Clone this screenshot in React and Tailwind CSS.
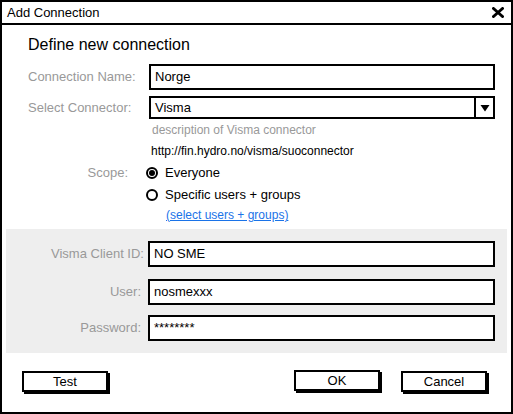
import React from 'react';

const font = { fontFamily: '"Liberation Sans", Arial, sans-serif' };

const Field = ({ value, className = '' }) => (
  <div className={`flex-1 h-[26px] border-2 border-black bg-white flex items-center px-[4px] text-[13px] text-black ${className}`}>
    {value}
  </div>
);

const Radio = ({ checked, label }) => (
  <div className="flex items-center gap-[7px] h-[14px]">
    <span className="w-[12px] h-[12px] rounded-full border-2 border-black flex items-center justify-center bg-white">
      {checked && <span className="w-[6px] h-[6px] rounded-full bg-black" />}
    </span>
    <span className="text-[13px] text-black">{label}</span>
  </div>
);

const Button = ({ children, className = '' }) => (
  <button className={`w-[86px] h-[21px] border-2 border-black bg-white shadow-[2px_2px_0_#000] text-[13px] text-black leading-none ${className}`}>
    {children}
  </button>
);

const App = () => {
  return (
    <div style={font} className="w-[513px] h-[414px] border-2 border-black bg-white flex flex-col overflow-hidden">
      {/* title bar */}
      <div className="h-[23px] border-b-2 border-black flex items-center justify-between pl-[5px] pr-[6px] shrink-0">
        <span className="text-[13px] text-black">Add Connection</span>
        <svg width="12" height="11" viewBox="0 0 12 11" className="mr-[1px]">
          <path d="M1.5 1.5 L10.5 9.5 M10.5 1.5 L1.5 9.5" stroke="#000" strokeWidth="3" strokeLinecap="round" />
        </svg>
      </div>

      <div className="pl-[26px] pr-[16px]">
        <h2 className="mt-[10px] text-[16px] leading-[20px] text-black">Define new connection</h2>

        <div className="mt-[9px] flex items-center">
          <label className="w-[121px] text-[13px] text-[#999]">Connection Name:</label>
          <Field value="Norge" />
        </div>

        <div className="mt-[6px] flex items-center">
          <label className="w-[121px] text-[13px] text-[#999]">Select Connector:</label>
          <div className="flex-1 h-[23px] border-2 border-black bg-white flex items-center text-[13px] text-black">
            <span className="flex-1 pl-[4px]">Visma</span>
            <span className="w-[19px] h-full border-l-2 border-black flex items-center justify-center">
              <svg width="10" height="8" viewBox="0 0 10 8">
                <path d="M0.5 1 L9.5 1 L5 7.5 Z" fill="#000" />
              </svg>
            </span>
          </div>
        </div>

        <div className="ml-[124px] mt-[3px] text-[12px] leading-[16px] text-[#999]">description of Visma connector</div>
        <div className="ml-[123px] mt-[5px] text-[12px] leading-[16px] text-black">http://fin.hydro.no/visma/suoconnector</div>

        <div className="mt-[7px] flex">
          <div className="w-[100px] text-right text-[13px] leading-[14px] text-[#999]">Scope:</div>
          <div className="ml-[18px] flex flex-col">
            <Radio checked label="Everyone" />
            <div className="mt-[8px]">
              <Radio label="Specific users + groups" />
            </div>
            <a className="ml-[20px] mt-[5px] text-[12px] leading-[16px] text-[#1a73e8] underline">(select users + groups)</a>
          </div>
        </div>
      </div>

      {/* credentials panel */}
      <div className="mt-[6px] mx-[4px] h-[124px] bg-[#eeeeee] pr-[12px] pt-[12px] flex flex-col">
        <div className="flex items-center">
          <label className="w-[138px] text-right text-[13px] text-[#999]">Visma Client ID:</label>
          <Field value="NO SME" className="ml-[4px]" />
        </div>
        <div className="mt-[12px] flex items-center">
          <label className="w-[138px] pr-[3px] text-right text-[13px] text-[#999]">User:</label>
          <Field value="nosmexxx" className="ml-[4px]" />
        </div>
        <div className="mt-[10px] flex items-center">
          <label className="w-[138px] pr-[3px] text-right text-[13px] text-[#999]">Password:</label>
          <Field value="********" className="ml-[4px]" />
        </div>
      </div>

      {/* buttons */}
      <div className="flex items-start pl-[20px] pr-[24px] mt-[17px]">
        <Button className="mt-[1px]">Test</Button>
        <div className="flex-1" />
        <Button>OK</Button>
        <Button className="ml-[21px] mt-[1px]">Cancel</Button>
      </div>
    </div>
  );
};

export default App;
